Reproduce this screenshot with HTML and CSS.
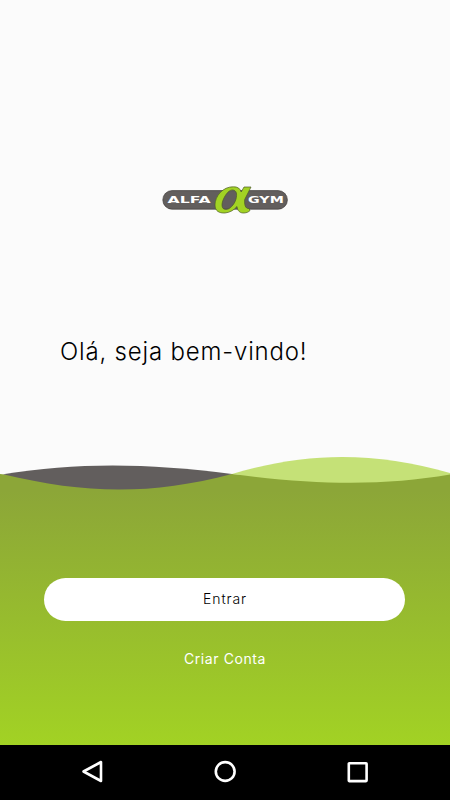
FILE: index.html
```html
<!DOCTYPE html>
<html lang="pt-BR">
<head>
<meta charset="utf-8">
<title>Alfa Gym</title>
<link rel="stylesheet" href="styles.css">
</head>
<body>
<div class="screen">
  <header class="intro">
    <svg class="logo" viewBox="0 0 130 32" role="img" aria-label="Alfa Gym">
      <rect class="logo-pill" x="2.8" y="6.600" width="124.600" height="18.600" rx="9.300"/>
      <text class="logo-word" transform="translate(7.500 19) scale(1.350 1)" textLength="32" lengthAdjust="spacingAndGlyphs">ALFA</text>
      <text class="logo-word" transform="translate(88 19) scale(1.350 1)" textLength="26.500" lengthAdjust="spacingAndGlyphs">GYM</text>
      <path class="mark" fill-rule="evenodd" d="M73.500 2.800C63 2.500 55 12 55 21C55 27 59 29.300 65 29C70 28.500 74 26 77 22.500C77.500 27 80 29.200 84 29C87 28.800 88.500 28 90 26.500L89 24.500C85 25 84.300 20 84.700 15.500L91 3H84L81.200 8C80 4.500 78 2.800 73.500 2.800ZM73 6C76.500 6.500 77.300 10 76 15C74.300 21 69.500 25.500 66 25.500C61.500 25.500 61 20.500 63.500 15C66 9.500 69.500 5.500 73 6Z"/>
    </svg>
    <h1 class="greeting">Olá, seja bem-vindo!</h1>
  </header>
  <svg class="waves" viewBox="0 0 450 36">
    <path class="wave-base" d="M0 19C75 28 155 28 232 19C300 24 380 24 450 18.500V36H0Z"/>
    <path class="wave-dark" d="M3 19.300C75 7.500 145 7.500 232 19C150 40.500 85 39 3 19.300Z"/>
    <path class="wave-light" d="M232 19C308 -3.500 374 -3.500 450 18V19.500C385 30.500 320 30.500 232 19Z"/>
  </svg>
  <main class="actions">
    <button class="enter">Entrar</button>
    <a class="create">Criar Conta</a>
  </main>
  <nav class="system-bar">
    <svg class="nav-icon" viewBox="0 0 24 24"><path d="M3.500 11.500 21 2V21Z"/></svg>
    <svg class="nav-icon" viewBox="0 0 24 24"><circle cx="12.200" cy="11.500" r="9.400"/></svg>
    <svg class="nav-icon" viewBox="0 0 24 24"><rect x="2.800" y="3.300" width="17.800" height="17.800" rx=".5"/></svg>
  </nav>
</div>
</body>
</html>
```

FILE: styles.css
```css
* { box-sizing: border-box; }
body {
  margin: 0;
  font-family: Inter, sans-serif;
}
.screen {
  width: 450px;
  height: 800px;
  display: flex;
  flex-direction: column;
  background: #fbfbfb;
}
.intro {
  height: 455px;
  padding-top: 184px;
  display: flex;
  flex-direction: column;
}
.logo {
  width: 130px;
  height: 32px;
  align-self: center;
  flex: none;
}
.logo-pill {
  fill: #625e5d;
  stroke: #403c3b;
  stroke-width: .7;
}
.logo-word {
  fill: #fff;
  font: 700 9.2px "DejaVu Sans", sans-serif;
}
.mark {
  fill: #a2d224;
  stroke: #4c5a28;
  stroke-width: .7;
}
.greeting {
  margin: 120px 0 0 60px;
  font-size: 24px;
  line-height: 32px;
  font-weight: 350;
  letter-spacing: .82px;
  color: #000;
  white-space: nowrap;
}
.waves {
  display: block;
  width: 450px;
  height: 36px;
  flex: none;
}
.wave-base { fill: #8ca638; }
.wave-dark { fill: #625e5d; }
.wave-light { fill: #c5e177; }
.actions {
  height: 254px;
  padding-top: 87px;
  display: flex;
  flex-direction: column;
  align-items: center;
  background: linear-gradient(#8ca638, #a2d224);
}
.enter {
  width: 361px;
  height: 43px;
  margin-right: 1px;
  padding: 0 0 2px 1px;
  border: 0;
  border-radius: 22px;
  background: #fff;
  color: #000;
  font: 300 14px/40px Inter, sans-serif;
  letter-spacing: .9px;
}
.create {
  margin-top: 28px;
  color: #fff;
  font-size: 14px;
  line-height: 20px;
  font-weight: 400;
  letter-spacing: .6px;
}
.system-bar {
  height: 55px;
  padding: 0 80px 1px;
  display: flex;
  align-items: center;
  justify-content: space-between;
  background: #000;
}
.nav-icon {
  width: 24px;
  height: 24px;
  fill: none;
  stroke: #fff;
  stroke-width: 2.6;
  stroke-linejoin: round;
}
```
